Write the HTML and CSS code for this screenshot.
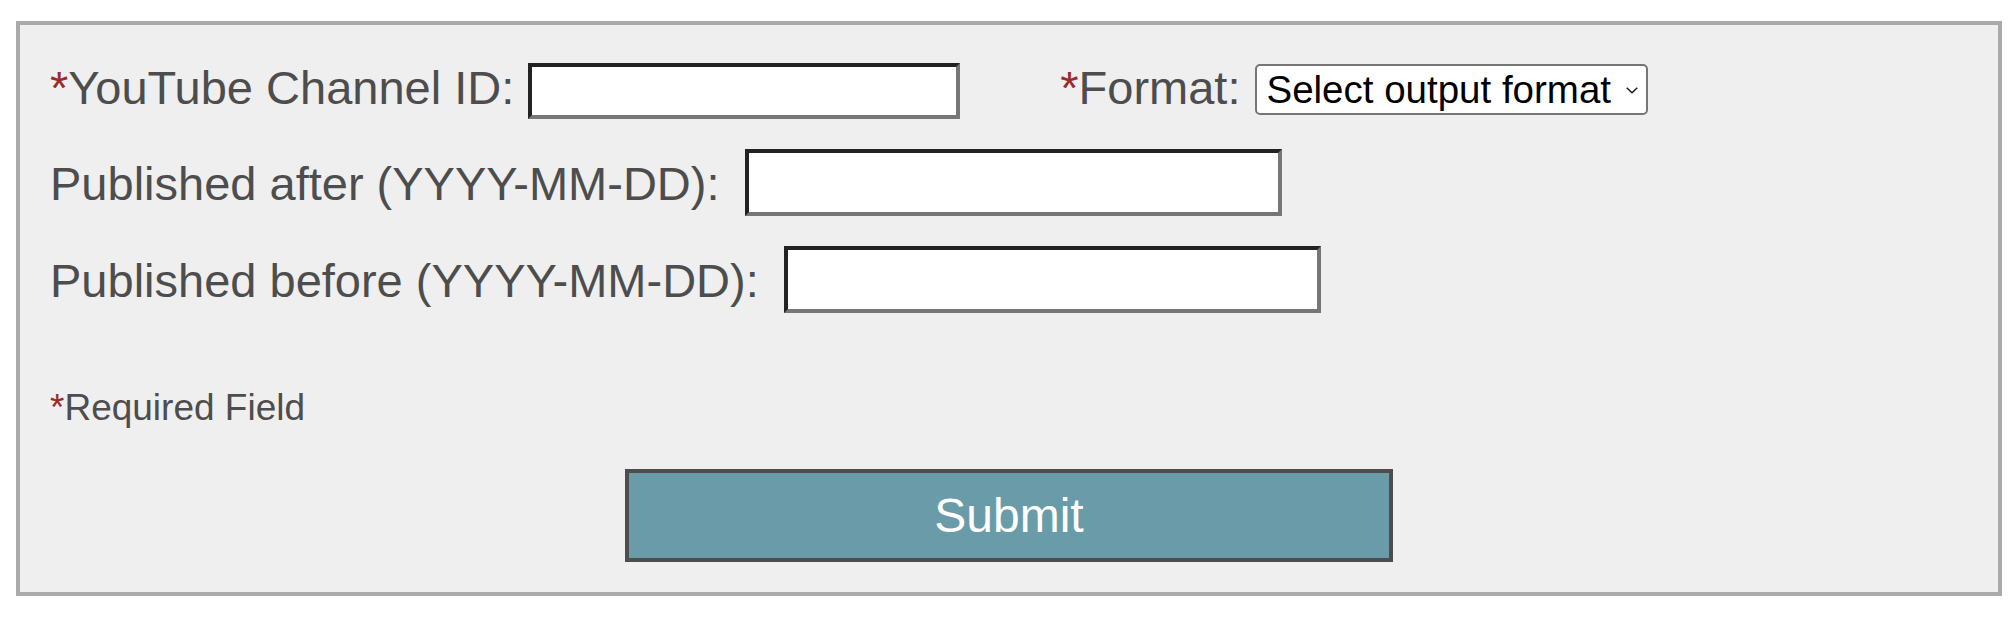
FILE: index.html
```html
<!DOCTYPE html>
<html lang="en">
<head>
<meta charset="utf-8">
<title>YouTube Channel Export</title>
<link rel="stylesheet" href="styles.css">
</head>
<body>
<form class="panel">
  <div class="row row-first">
    <label class="field"><span class="req">*</span>YouTube Channel ID:</label>
    <input class="text-input input-channel" type="text">
    <label class="field format-label"><span class="req">*</span>Format:</label>
    <span class="select-wrap">
      <select class="format-select">
        <option>Select output format</option>
      </select>
      <svg class="chevron" width="12" height="7" viewBox="0 0 12 7" aria-hidden="true"><polyline points="0.7,0.7 6,5.8 11.3,0.7" fill="none" stroke="#111" stroke-width="1.3"/></svg>
    </span>
  </div>
  <div class="row row-date">
    <label class="field">Published after (YYYY-MM-DD):</label>
    <input class="text-input input-date" type="text">
  </div>
  <div class="row row-date">
    <label class="field">Published before (YYYY-MM-DD):</label>
    <input class="text-input input-date" type="text">
  </div>
  <p class="note"><span class="req">*</span>Required Field</p>
  <div class="actions">
    <button class="submit" type="button">Submit</button>
  </div>
</form>
</body>
</html>
```
FILE: styles.css
```css
body {
  margin: 0;
  background: #ffffff;
  font-family: "Liberation Sans", Arial, Helvetica, sans-serif;
}

.panel {
  box-sizing: border-box;
  width: 1986px;
  margin: 21px 0 0 16px;
  border: 4px solid #aaaaaa;
  background: #efefef;
  padding: 36px 30px 30px 30px;
}

.row {
  display: flex;
  align-items: flex-start;
}

.row + .row {
  margin-top: 30px;
}

.field {
  font-size: 47px;
  line-height: 54px;
  color: #4d4d4d;
  white-space: nowrap;
}

.req {
  color: #9c2a2a;
}

.text-input {
  box-sizing: border-box;
  margin: 0 0 0 16px;
  padding: 0;
  background: #ffffff;
  border-width: 4px;
  border-style: solid;
  border-color: #222222 #767676 #767676 #222222;
  outline: none;
}

.input-channel {
  width: 432px;
  height: 56px;
  margin-top: 2px;
  margin-left: 14px;
}

.input-date {
  width: 537px;
  height: 67px;
  margin-left: 25px;
}

.row-date .field {
  margin-top: 7.5px;
}

.format-label {
  margin-left: 100px;
}

.select-wrap {
  position: relative;
  display: inline-block;
  margin-left: 15px;
  margin-top: 3px;
}

.format-select {
  box-sizing: border-box;
  display: block;
  width: 393px;
  height: 51px;
  margin: 0;
  padding: 0 30px 0 9px;
  border: 2px solid #767676;
  border-radius: 5px;
  background: #ffffff;
  color: #000000;
  font-family: "Liberation Sans", Arial, Helvetica, sans-serif;
  font-size: 38.5px;
  -webkit-appearance: none;
  appearance: none;
}

.chevron {
  position: absolute;
  right: 10px;
  top: 23px;
  pointer-events: none;
}

.note {
  margin: 73px 0 0 0;
  font-size: 37px;
  line-height: 43px;
  color: #4d4d4d;
}

.actions {
  display: flex;
  justify-content: center;
  margin-top: 40px;
}

.submit {
  box-sizing: border-box;
  width: 768px;
  height: 93px;
  margin: 0;
  padding: 0;
  border: 4px solid #4d4d4d;
  background: #6a9ba8;
  color: #ffffff;
  font-family: "Liberation Sans", Arial, Helvetica, sans-serif;
  font-size: 48px;
}
```
